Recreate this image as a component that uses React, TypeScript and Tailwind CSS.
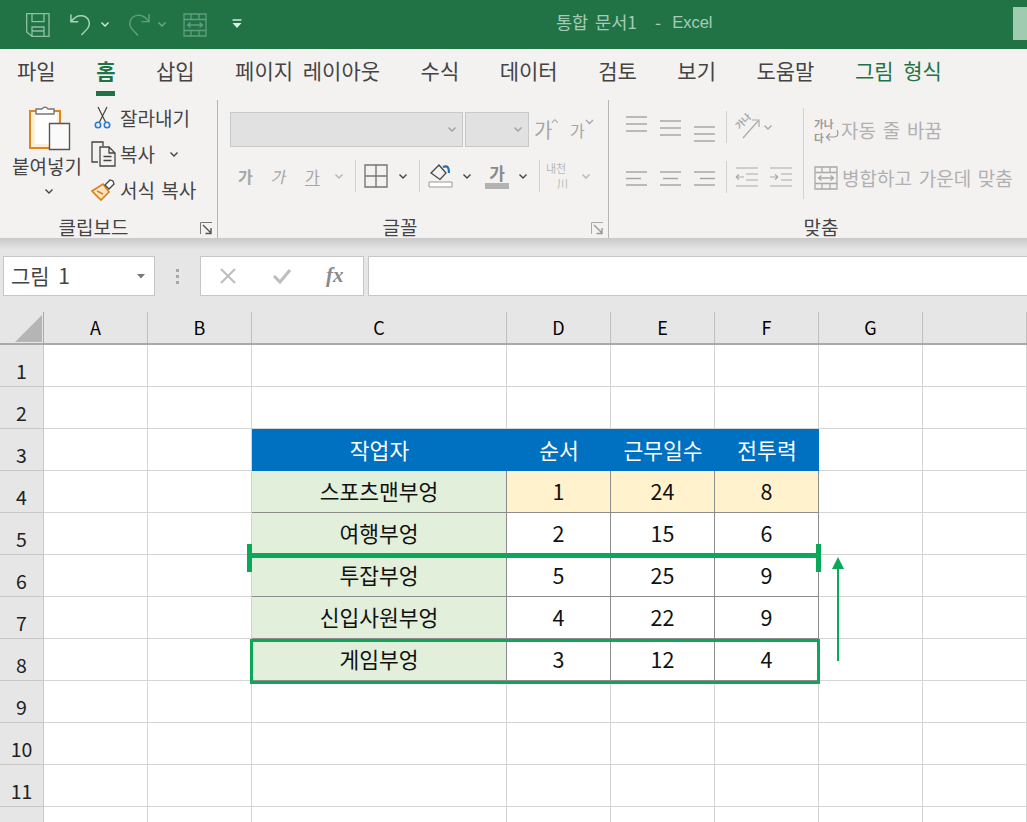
const font = 'font-["Noto_Sans_CJK_KR","Noto_Sans",sans-serif]';

const columns = ['A', 'B', 'C', 'D', 'E', 'F', 'G', ''];

const tableRows: Record<number, { text: string; fill: string; kind?: string }[]> = {
  3: [
    { text: '작업자', fill: 'bg-[#0070c0]', kind: 'head' },
    { text: '순서', fill: 'bg-[#0070c0]', kind: 'head' },
    { text: '근무일수', fill: 'bg-[#0070c0]', kind: 'head' },
    { text: '전투력', fill: 'bg-[#0070c0]', kind: 'head' },
  ],
  4: [
    { text: '스포츠맨부엉', fill: 'bg-[#e2efda]' },
    { text: '1', fill: 'bg-[#fff2cc]' },
    { text: '24', fill: 'bg-[#fff2cc]' },
    { text: '8', fill: 'bg-[#fff2cc]' },
  ],
  5: [
    { text: '여행부엉', fill: 'bg-[#e2efda]' },
    { text: '2', fill: 'bg-white' },
    { text: '15', fill: 'bg-white' },
    { text: '6', fill: 'bg-white' },
  ],
  6: [
    { text: '투잡부엉', fill: 'bg-[#e2efda]' },
    { text: '5', fill: 'bg-white' },
    { text: '25', fill: 'bg-white' },
    { text: '9', fill: 'bg-white' },
  ],
  7: [
    { text: '신입사원부엉', fill: 'bg-[#e2efda]' },
    { text: '4', fill: 'bg-white' },
    { text: '22', fill: 'bg-white' },
    { text: '9', fill: 'bg-white' },
  ],
  8: [
    { text: '게임부엉', fill: 'bg-[#e2efda]' },
    { text: '3', fill: 'bg-white' },
    { text: '12', fill: 'bg-white' },
    { text: '4', fill: 'bg-white' },
  ],
};

function Chevron({ color = '#444', className = '' }: { color?: string; className?: string }) {
  return (
    <svg width="10" height="7" viewBox="0 0 10 7" className={className}>
      <path d="M1.5 1.5 5 5l3.5-3.5" fill="none" stroke={color} strokeWidth="1.4" />
    </svg>
  );
}

function Launcher({ dim }: { dim?: boolean }) {
  return (
    <svg width="13" height="13" viewBox="0 0 13 13">
      <path d="M.5 12V.5H12" fill="none" stroke={dim ? '#aaa' : '#777'} strokeWidth="1" />
      <path d="M3 3l8 8M11 6v5.5H5.5" fill="none" stroke={dim ? '#999' : '#555'} strokeWidth="1.4" />
    </svg>
  );
}

function AlignIcon({ lines }: { lines: [number, number, number][] }) {
  return (
    <svg width="24" height="24" viewBox="0 0 24 24" className="overflow-visible">
      {lines.map(([x1, x2, y], i) => (
        <path key={i} d={`M${x1} ${y}H${x2}`} stroke="#a3a3a3" strokeWidth="1.4" />
      ))}
    </svg>
  );
}

function MergeIcon({ color }: { color: string }) {
  return (
    <svg width="24" height="24" viewBox="0 0 24 24" fill="none" stroke={color} strokeWidth="1.3">
      <path d="M1 1h22v22H1zM1 6.5h22M1 17.5h22M8 1v5.500M16 1v5.500M8 17.500V23M16 17.500V23" />
      <path d="M4.500 12h15M7.500 9.500 4.500 12l3 2.500M16.500 9.500l3 2.500-3 2.500" />
    </svg>
  );
}

function Sep({ h = 'h-[32px]' }: { h?: string }) {
  return <div className={`w-px ${h} bg-[#d2d2d2]`} />;
}

function TitleBar() {
  return (
    <div className="relative flex h-[49px] items-center bg-[#217346] pl-[26px]">
      <svg width="24" height="24" viewBox="0 0 24 24" fill="none" stroke="#8fc0a5" strokeWidth="1.3">
        <path d="M3 .7h20v22.600H6L.7 19V.7zM6 .7v8h12v-8M6 23v-9h12v9M6 18h12" />
      </svg>
      <svg width="22" height="25" viewBox="0 0 24 26" fill="none" stroke="#a9d2bc" strokeWidth="1.6" className="ml-[20px]">
        <path d="M1 2v8h8M1.500 9.500C5 5 9 3 13 3.500c8 1 10 9 6 14l-6.500 7" />
      </svg>
      <Chevron color="#d8e9df" className="ml-[8px]" />
      <svg width="23" height="25" viewBox="0 0 24 26" fill="none" stroke="#5f9e7f" strokeWidth="1.5" className="ml-[17px]">
        <path d="M23 2v8h-8M22.500 9.500C19 5 15 3 11 3.500c-8 1-10 9-6 14l6.500 7" />
      </svg>
      <Chevron color="#6fa88a" className="ml-[7px]" />
      <div className="ml-[16px]">
        <MergeIcon color="#5f9e7f" />
      </div>
      <svg width="12" height="11" viewBox="0 0 12 11" fill="none" className="ml-[24px]">
        <path d="M1.500 1h9" stroke="#e0efe6" strokeWidth="1.400" />
        <path d="M1.500 4h9l-4.500 5z" fill="#e0efe6" />
      </svg>
      <div className="absolute left-[556px] top-[9px] flex whitespace-nowrap text-[17.500px] leading-[26px] text-[#a6ccb7] [word-spacing:3px]">
        <span>통합 문서1</span>
        <span className="ml-[18px]">-</span>
        <span className={'ml-[11px] font-["Liberation_Sans"] text-[16.500px]'}>Excel</span>
      </div>
      <div className="absolute left-[1013px] top-[7px] h-[33px] w-[14px] bg-[#9fcbb0]" />
    </div>
  );
}

function Tabs() {
  const tabs = ['파일', '홈', '삽입', '페이지 레이아웃', '수식', '데이터', '검토', '보기', '도움말', '그림 형식'];
  return (
    <div className="flex h-[50px] gap-[40.500px] bg-[#f3f2f1] pl-[17px] text-[21px] leading-[43px] text-[#444] [word-spacing:5px]">
      {tabs.map((t) => {
        const home = t === '홈';
        return (
          <div key={t} className={`relative whitespace-nowrap ${home ? 'font-bold text-[#217346]' : ''} ${t === '그림 형식' ? 'text-[#217346]' : ''}`}>
            {t}
            {home && <div className="absolute bottom-[3px] left-0 h-[5px] w-full bg-[#217346]" />}
          </div>
        );
      })}
    </div>
  );
}

function GroupLabel({ text }: { text: string }) {
  return (
    <div className="flex h-[21px] items-center justify-center text-[19px] leading-[21px] text-[#444]">
      {text}
    </div>
  );
}

function Clipboard() {
  return (
    <div className="relative flex w-[218px] shrink-0 flex-col border-r border-[#b5b5b5]">
      <div className="flex h-[116px] text-[19px] text-[#444]">
        <div className="flex w-[91px] flex-col items-center pt-[5px]">
          <svg width="42" height="46" viewBox="0 0 42 46" className="ml-[9px]">
            <path d="M1 6h30v37H1z" fill="#fcefd9" stroke="#e0861c" strokeWidth="2" />
            <path d="M6 8h22v31H6z" fill="#fff" />
            <path d="M7 9V4h6a3.500 3.500 0 0 1 6 0h6v5z" fill="#fff" stroke="#777" strokeWidth="1.400" />
            <path d="M20.500 18.500h20v26h-20z" fill="#fafafa" stroke="#555" strokeWidth="1.400" />
          </svg>
          <div className="ml-[3px] mt-[4px] whitespace-nowrap leading-[22px]">붙여넣기</div>
          <Chevron className="ml-[6px] mt-[11px]" />
        </div>
        <div className="flex flex-col">
          <div className="flex h-[36px] items-center pl-[3px]">
            <svg width="18" height="24" viewBox="0 0 18 24" fill="none">
              <path d="M4 1l7.500 15M13 1L5.500 16" stroke="#444" strokeWidth="1.200" />
              <circle cx="4" cy="19" r="2.700" stroke="#2b7cd3" strokeWidth="1.600" />
              <circle cx="13" cy="19" r="2.700" stroke="#2b7cd3" strokeWidth="1.600" />
            </svg>
            <span className="ml-[8px] whitespace-nowrap">잘라내기</span>
          </div>
          <div className="flex h-[36px] items-center">
            <svg width="25" height="26" viewBox="0 0 25 26" fill="none" stroke="#444" strokeWidth="1.300">
              <path d="M7 21H1V1h11v4" />
              <path d="M9 6h9l6 6v13H9zM18 6v6h6M12.500 15.500h8M12.500 19.500h8" />
            </svg>
            <span className="ml-[4px] whitespace-nowrap">복사</span>
            <Chevron className="ml-[14px]" />
          </div>
          <div className="flex h-[36px] items-center">
            <svg width="25" height="24" viewBox="0 0 25 24" fill="none">
              <path d="M1 13 12 6l6 8-8 8z" fill="#fbe3c2" stroke="#d9801c" strokeWidth="1.600" />
              <path d="M6 13l6 3" stroke="#d9801c" strokeWidth="1.400" />
              <path d="M14 7l5-5 3 1 1 3-5 5z" fill="#fff" stroke="#444" strokeWidth="1.300" />
            </svg>
            <span className="ml-[4px] whitespace-nowrap [word-spacing:2px]">서식 복사</span>
          </div>
        </div>
      </div>
      <div className="pr-[30px]">
        <GroupLabel text="클립보드" />
      </div>
      <div className="absolute bottom-[3px] right-[4px] flex">
        <Launcher />
      </div>
    </div>
  );
}

function FontGroup() {
  const dim = 'text-[#a6a6a6]';
  return (
    <div className="relative flex w-[391px] shrink-0 flex-col border-r border-[#b5b5b5]">
      <div className="h-[116px] pl-[12px] pt-[12px]">
        <div className="flex h-[35px] items-center">
          <div className="flex h-[35px] w-[233px] items-center justify-end border border-[#c8c8c8] bg-[#e1e1e1] pr-[5px]">
            <Chevron color="#a0a0a0" />
          </div>
          <div className="ml-[2px] flex h-[35px] w-[64px] items-center justify-end border border-[#c8c8c8] bg-[#e1e1e1] pr-[5px]">
            <Chevron color="#a0a0a0" />
          </div>
          <div className={`ml-[5px] flex w-[25px] text-[20px] leading-[28px] ${dim}`}>
            가
            <svg width="9" height="6" viewBox="0 0 9 6" className="-ml-[1px] mt-[2px]">
              <path d="M1 5l3.500-3.500L8 5" fill="none" stroke="#a6a6a6" strokeWidth="1.300" />
            </svg>
          </div>
          <div className={`ml-[11px] flex w-[26px] text-[16px] leading-[28px] ${dim}`}>
            가
            <svg width="9" height="6" viewBox="0 0 9 6" className="mt-[3px]">
              <path d="M1 1l3.500 3.500L8 1" fill="none" stroke="#a6a6a6" strokeWidth="1.300" />
            </svg>
          </div>
        </div>
        <div className="mt-[11px] flex h-[36px] items-center">
          <span className={`ml-[8px] w-[27px] text-[16px] font-bold ${dim}`}>가</span>
          <span className={`ml-[7px] w-[27px] -skew-x-12 text-[16px] ${dim}`}>가</span>
          <span className={`ml-[6px] w-[22px] text-[16px] underline underline-offset-2 ${dim}`}>가</span>
          <Chevron color="#b5b5b5" className="ml-[7px]" />
          <div className="ml-[11px]">
            <Sep />
          </div>
          <svg width="24" height="24" viewBox="0 0 24 24" fill="none" stroke="#777" strokeWidth="1.400" className="ml-[8px]">
            <path d="M1 1h22v22H1zM12 1v22M1 12h22" />
          </svg>
          <Chevron className="ml-[10px]" />
          <div className="ml-[11px]">
            <Sep />
          </div>
          <svg width="25" height="24" viewBox="0 0 25 24" fill="none" className="ml-[8px]">
            <path d="M3 9l8-8 7 8-6 6.500z" stroke="#444" strokeWidth="1.300" />
            <path d="M15 3c5-2 6 1 6 6" stroke="#1f6fb5" strokeWidth="2.200" />
            <path d="M1 18h23v5H1z" fill="#fff" stroke="#999" />
          </svg>
          <Chevron className="ml-[9px]" />
          <div className="ml-[13px] flex w-[24px] flex-col items-center">
            <span className="text-[17px] font-bold leading-[20px] text-[#8a8a8a]">가</span>
            <div className="h-[6px] w-[24px] bg-[#b3b3b3]" />
          </div>
          <Chevron className="ml-[9px]" />
          <div className="ml-[11px]">
            <Sep />
          </div>
          <div className="ml-[6px] flex w-[26px] flex-col text-[11px] leading-[15px] text-[#b8b8b8]">
            <span>내천</span>
            <span className="self-end pr-[4px]">川</span>
          </div>
          <Chevron color="#b5b5b5" className="ml-[9px]" />
        </div>
      </div>
      <div className="pr-[26px]">
        <GroupLabel text="글꼴" />
      </div>
      <div className="absolute bottom-[3px] right-[4px] flex">
        <Launcher dim />
      </div>
    </div>
  );
}

function AlignGroup() {
  return (
    <div className="flex flex-1 flex-col">
      <div className="flex h-[116px] pt-[7px]">
        <div className="flex flex-col">
          <div className="flex h-[40px] items-center pl-[16px]">
            <div className="flex gap-[10px]">
              <AlignIcon lines={[[1, 22, 2], [1, 22, 9], [1, 22, 16]]} />
              <AlignIcon lines={[[1, 22, 6], [1, 22, 13], [1, 22, 20]]} />
              <AlignIcon lines={[[1, 22, 12], [1, 22, 19], [1, 22, 26]]} />
            </div>
            <div className="ml-[9px]">
              <Sep />
            </div>
            <div className="ml-[7px] flex items-center">
              <div className="relative h-[26px] w-[26px]">
                <span className="absolute left-0 top-[2px] -rotate-45 whitespace-nowrap text-[9.500px] font-bold leading-[10px] text-[#a9a9a9]">가나</span>
                <svg width="26" height="26" viewBox="0 0 26 26" fill="none" stroke="#a9a9a9" strokeWidth="1.200">
                  <path d="M9 24 24 7M18 6h7v7" />
                </svg>
              </div>
              <Chevron color="#a9a9a9" className="ml-[3px]" />
            </div>
          </div>
          <div className="mt-[12px] flex h-[36px] items-center pl-[16px]">
            <div className="flex gap-[10px]">
              <AlignIcon lines={[[1, 22, 7], [1, 16, 13.500], [1, 22, 20]]} />
              <AlignIcon lines={[[1, 22, 7], [4, 19, 13.500], [1, 22, 20]]} />
              <AlignIcon lines={[[1, 22, 7], [7, 22, 13.500], [1, 22, 20]]} />
            </div>
            <div className="ml-[9px]">
              <Sep />
            </div>
            <svg width="24" height="24" viewBox="0 0 24 24" fill="none" stroke="#a9a9a9" strokeWidth="1.200" className="ml-[8px]">
              <path d="M1 3h22M1 21h22M11 9h12M11 15h12M1 12h8M1 12l3-2.500M1 12l3 2.500" />
            </svg>
            <svg width="24" height="24" viewBox="0 0 24 24" fill="none" stroke="#a9a9a9" strokeWidth="1.200" className="ml-[10px]">
              <path d="M1 3h22M1 21h22M12 9h11M12 15h11M1 12h8M9 12l-3-2.500M9 12l-3 2.500" />
            </svg>
          </div>
        </div>
        <div className="ml-[10px] mt-[1px] h-[91px] w-px bg-[#d2d2d2]" />
        <div className="ml-[10px] flex flex-col text-[19px] text-[#b0b0b0] [word-spacing:2.500px]">
          <div className="flex h-[46px] items-center">
            <div className="relative h-[26px] w-[24px]">
              <div className="text-[10.500px] font-bold leading-[14px] text-[#999]">
                가나
                <br />
                다
              </div>
              <svg width="16" height="14" viewBox="0 0 16 14" fill="none" stroke="#999" strokeWidth="1.200" className="absolute bottom-0 right-[-2px]">
                <path d="M13 1c2 3 1 7-3 7H3M6 4.500 2.500 8 6 11.500" />
              </svg>
            </div>
            <span className="ml-[3px] whitespace-nowrap">자동 줄 바꿈</span>
          </div>
          <div className="mt-[6px] flex h-[38px] items-center">
            <MergeIcon color="#a9a9a9" />
            <span className="ml-[4px] whitespace-nowrap">병합하고 가운데 맞춤</span>
          </div>
        </div>
      </div>
      <div className="pl-[6px]">
        <GroupLabel text="맞춤" />
      </div>
    </div>
  );
}

function FormulaBar() {
  return (
    <div className="flex h-[74px] items-start bg-gradient-to-b from-[#c9c9c9] via-[#e6e6e6] via-[16%] to-[#e6e6e6] pl-[3px] pt-[18px]">
      <div className="flex h-[40px] w-[152px] items-center justify-between border border-[#c6c6c6] bg-white pl-[7px] pr-[9px] text-[21px] text-[#444] [word-spacing:4px]">
        <span>그림 1</span>
        <svg width="8" height="5" viewBox="0 0 8 5">
          <path d="M0 0h8L4 4.500z" fill="#777" />
        </svg>
      </div>
      <div className="flex h-[40px] w-[45px] flex-col items-center justify-center gap-[3px]">
        <div className="h-[3px] w-[3px] bg-[#a8a8a8]" />
        <div className="h-[3px] w-[3px] bg-[#a8a8a8]" />
        <div className="h-[3px] w-[3px] bg-[#a8a8a8]" />
      </div>
      <div className="flex h-[40px] w-[164px] items-center border border-[#c6c6c6] bg-white pl-[18px]">
        <svg width="18" height="18" viewBox="0 0 18 18">
          <path d="M2 2l14 14M16 2 2 16" stroke="#bdbdbd" strokeWidth="2" />
        </svg>
        <svg width="20" height="18" viewBox="0 0 20 18" className="ml-[35px]">
          <path d="M2 9l6 6L18 3" fill="none" stroke="#bdbdbd" strokeWidth="3" />
        </svg>
        <span className={'ml-[34px] font-["Liberation_Serif"] text-[21px] font-bold italic text-[#8a8a8a]'}>fx</span>
      </div>
      <div className="ml-[4px] h-[40px] flex-1 border border-r-0 border-[#c6c6c6] bg-white" />
    </div>
  );
}

function Sheet() {
  const widths = ['w-[104px]', 'w-[104px]', 'w-[255px]', 'w-[104px]', 'w-[104px]', 'w-[104px]', 'w-[104px]', 'w-[104px]'];
  const cell = 'border-r border-b border-[#d4d4d4]';
  const dark = 'border-r border-b border-[#8c8c8c]';
  return (
    <div className="relative">
      <div className="flex h-[33px] border-b-2 border-[#a9a9a9] bg-[#e6e6e6]">
        <div className="flex w-[44px] items-end justify-end border-r border-[#a9a9a9] pb-px pr-[1px]">
          <svg width="27" height="27" viewBox="0 0 27 27">
            <path d="M27 0v27H0z" fill="#b5b5b5" />
          </svg>
        </div>
        {columns.map((c, i) => (
          <div key={i} className={`flex items-center justify-center border-r border-[#c0c0c0] pb-[1px] text-[18px] leading-none text-black ${widths[i]}`}>
            {c}
          </div>
        ))}
      </div>
      {[1, 2, 3, 4, 5, 6, 7, 8, 9, 10, 11, 12].map((r) => (
        <div key={r} className="flex h-[42px]">
          <div className="flex w-[44px] items-center justify-center border-r border-b border-[#c8c8c8] bg-[#e6e6e6] pt-[10px] text-[19.500px] leading-none text-[#222]">
            {r < 12 ? r : ''}
          </div>
          {columns.map((_, i) => {
            const row = tableRows[r];
            const data = row && i >= 2 && i <= 5 ? row[i - 2] : null;
            if (!data) return <div key={i} className={`${cell} ${widths[i]}`} />;
            return (
              <div
                key={i}
                className={`flex items-center justify-center text-[21.500px] ${widths[i]} ${data.fill} ${
                  data.kind === 'head' ? 'text-white' : `text-[#111] ${dark}`
                }`}
              >
                {data.text}
              </div>
            );
          })}
        </div>
      ))}

      {/* green annotations drawn on top of the sheet */}
      <div className="absolute left-[250px] top-[241px] h-[5px] w-[569px] bg-[#0aa858]" />
      <div className="absolute left-[247px] top-[232px] h-[28px] w-[5px] bg-[#0aa858]" />
      <div className="absolute left-[816px] top-[232px] h-[28px] w-[5px] bg-[#0aa858]" />
      <div className="absolute left-[250px] top-[327px] h-[45px] w-[570px] border-[3.500px] border-[#0aa858]" />
      <svg width="16" height="104" viewBox="0 0 16 104" className="absolute left-[830px] top-[245px]">
        <path d="M8 12v92" stroke="#0aa858" strokeWidth="2" />
        <path d="M8 0l6 12H2z" fill="#0aa858" />
      </svg>
    </div>
  );
}

export default function App() {
  return (
    <div className={`h-[822px] w-[1027px] overflow-hidden bg-white ${font}`}>
      <TitleBar />
      <Tabs />
      <div className="flex h-[139px] bg-[#f3f2f1] pt-[1px]">
        <Clipboard />
        <FontGroup />
        <AlignGroup />
      </div>
      <FormulaBar />
      <Sheet />
    </div>
  );
}
